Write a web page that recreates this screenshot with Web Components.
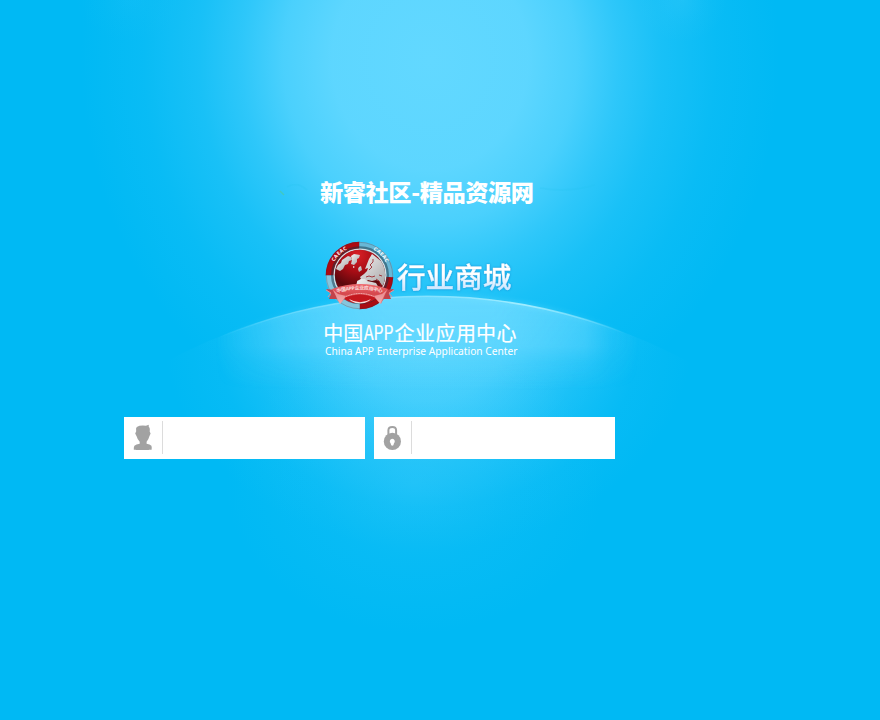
<!DOCTYPE html>
<html lang="zh-CN">
<head>
<meta charset="utf-8">
<title>行业商城</title>
<style>
html,body{margin:0;height:100%;background:#00b9f4;overflow:hidden}
body{font-family:"Noto Sans","Noto Sans CJK SC",sans-serif}
</style>
</head>
<body>
<login-page></login-page>
<script>
const define = (name, html) => {
  const t = document.createElement('template');
  t.innerHTML = html;
  customElements.define(name, class extends HTMLElement {
    constructor() {
      super();
      this.attachShadow({mode: 'open'}).append(t.content.cloneNode(true));
    }
  });
};

define('sky-backdrop', `
<style>:host{display:block;width:880px;height:720px}svg{display:block}</style>
<svg width="880" height="720" viewBox="0 0 880 720" aria-hidden="true">
  <defs>
    <radialGradient id="top" gradientUnits="userSpaceOnUse" cx="0" cy="0" r="1" gradientTransform="translate(430 60) scale(350 390)">
      <stop offset="0" stop-color="#62d8ff"/><stop offset=".28" stop-color="#60d7ff" stop-opacity=".97"/>
      <stop offset=".42" stop-color="#5dd6ff" stop-opacity=".8"/><stop offset=".54" stop-color="#58d4ff" stop-opacity=".52"/>
      <stop offset=".66" stop-color="#58d4ff" stop-opacity=".28"/>
      <stop offset=".82" stop-color="#58d4ff" stop-opacity=".1"/><stop offset="1" stop-color="#58d4ff" stop-opacity="0"/>
    </radialGradient>
    <radialGradient id="mid" gradientUnits="userSpaceOnUse" cx="0" cy="0" r="1" gradientTransform="translate(428 335) scale(265 215)">
      <stop offset="0" stop-color="#62d8ff" stop-opacity=".92"/><stop offset=".3" stop-color="#5ad5ff" stop-opacity=".74"/>
      <stop offset=".6" stop-color="#50d1ff" stop-opacity=".3"/><stop offset=".8" stop-color="#50d1ff" stop-opacity=".08"/><stop offset="1" stop-color="#50d1ff" stop-opacity="0"/>
    </radialGradient>
    <radialGradient id="low"><stop offset="0" stop-color="#5ad4ff" stop-opacity=".35"/><stop offset=".5" stop-color="#5ad4ff" stop-opacity=".13"/><stop offset="1" stop-color="#5ad4ff" stop-opacity="0"/></radialGradient>
    <linearGradient id="domeX" gradientUnits="userSpaceOnUse" x1="215" x2="640" y1="0" y2="0">
      <stop offset="0" stop-color="#fff" stop-opacity="0"/><stop offset=".15" stop-color="#fff" stop-opacity=".5"/>
      <stop offset=".4" stop-color="#fff"/><stop offset=".65" stop-color="#fff"/><stop offset=".87" stop-color="#fff" stop-opacity=".65"/>
      <stop offset=".93" stop-color="#fff" stop-opacity=".2"/><stop offset="1" stop-color="#fff" stop-opacity="0"/>
    </linearGradient>
    <linearGradient id="domeY" gradientUnits="userSpaceOnUse" x1="0" x2="0" y1="296" y2="390">
      <stop offset="0" stop-color="#6bdaff" stop-opacity=".9"/><stop offset=".53" stop-color="#68d9ff" stop-opacity=".76"/>
      <stop offset=".7" stop-color="#68d9ff" stop-opacity=".35"/><stop offset="1" stop-color="#68d9ff" stop-opacity="0"/>
    </linearGradient>
    <linearGradient id="rim" gradientUnits="userSpaceOnUse" x1="220" x2="625" y1="0" y2="0">
      <stop offset="0" stop-color="#82e4ff" stop-opacity="0"/><stop offset=".25" stop-color="#8ce5ff" stop-opacity=".6"/>
      <stop offset=".5" stop-color="#8ce5ff" stop-opacity=".75"/><stop offset=".75" stop-color="#a0edff"/>
      <stop offset="1" stop-color="#a6efff" stop-opacity="0"/>
    </linearGradient>
    <mask id="fade"><rect x="190" y="280" width="470" height="130" fill="url(#domeX)"/></mask>
    <filter id="soft" x="-20%" y="-100%" width="140%" height="300%"><feGaussianBlur stdDeviation="2.5"/></filter>
    <filter id="fine"><feGaussianBlur stdDeviation=".5"/></filter>
    <clipPath id="arc"><path d="M140 376.7A550 550 0 0 1 714 376.7V720H140Z"/></clipPath>
  </defs>
  <rect width="880" height="720" fill="#00b9f4"/>
  <rect width="880" height="720" fill="url(#top)"/>
  <g clip-path="url(#arc)">
    <rect y="290" width="880" height="430" fill="url(#mid)"/>
    <rect x="190" y="280" width="470" height="120" fill="url(#domeY)" mask="url(#fade)" opacity=".85"/>
  </g>
  <path d="M190 350A550 550 0 0 1 664 350" fill="none" stroke="url(#rim)" stroke-width="4" opacity=".25" filter="url(#soft)"/>
  <path d="M190 350A550 550 0 0 1 664 350" fill="none" stroke="url(#rim)" stroke-width="1.6" filter="url(#fine)"/>
  <ellipse cx="415" cy="485" rx="190" ry="150" fill="url(#low)" opacity=".65"/>
  <ellipse cx="682" cy="0" rx="45" ry="42" fill="url(#low)" opacity=".5"/>
  <ellipse cx="130" cy="0" rx="55" ry="42" fill="url(#low)" opacity=".2"/>
  <path d="M280 191l4 4" stroke="#4ac9ae" stroke-width="1.5" opacity=".75"/>
  <path d="M287 187q10 -6 20 3M540 188q28 5 55 -3" stroke="#23c2ef" fill="none" stroke-width="2" opacity=".18" filter="url(#fine)"/>
</svg>`);

define('caeac-emblem', `
<style>:host{display:block;width:72px;height:72px}svg{display:block}text{font-family:"Noto Sans","Noto Sans CJK SC",sans-serif;font-weight:700;fill:#fff}</style>
<svg width="72" height="72" viewBox="324 240 72 72">
  <defs>
    <radialGradient id="g" cx=".45" cy=".1" r=".95"><stop stop-color="#d92026"/><stop offset=".35" stop-color="#a80d15"/><stop offset=".68" stop-color="#5b080d"/><stop offset="1" stop-color="#a01a1e"/></radialGradient>
    <linearGradient id="l" x1="0" x2="1" y2="1"><stop stop-color="#f4f4f4"/><stop offset="1" stop-color="#a3a1a2"/></linearGradient>
    <linearGradient id="r" x2="0" y2="1"><stop stop-color="#ef6b70"/><stop offset=".5" stop-color="#d5474c"/><stop offset="1" stop-color="#e8888b"/></linearGradient>
    <path id="la" d="M332.9 264.5A28.8 28.8 0 0 1 351 248"/>
    <path id="ra" d="M371.5 249A28.8 28.8 0 0 1 387.3 266"/>
    <path id="rb" d="M335 293.5Q360 285.5 385 293.5"/>
    <clipPath id="c"><circle cx="360" cy="275" r="25.2"/></clipPath>
  </defs>
  <g fill="none" stroke-width="9">
    <path d="M330.2 275.5A29.3 29.3 0 0 1 359.5 246.2" stroke="#ae0a12"/>
    <path d="M359.5 246.2A29.3 29.3 0 0 1 388.8 277" stroke="#68b8d6"/>
    <path d="M388.8 277A29.3 29.3 0 0 1 359.5 304.8" stroke="#aa0b12"/>
    <path d="M359.5 304.8A29.3 29.3 0 0 1 330.2 275.5" stroke="#86c5dc"/>
    <circle cx="359.5" cy="275.5" r="33.2" stroke="#392b38" stroke-width=".8" opacity=".3"/>
    <circle cx="360" cy="275.3" r="27.7" stroke="#173342" stroke-width="2.6" opacity=".5"/>
    <circle cx="360" cy="275" r="25.8" stroke="#d5dfe3" stroke-width="1.3"/>
  </g>
  <circle cx="360" cy="275" r="25.2" fill="url(#g)"/>
  <g clip-path="url(#c)" fill="url(#l)">
    <path d="M345 258l3-2 3 1 1 3-3 1-1 3-3 1-2 4-3 2-2-1-2-1 2-4 3-2 1-3z"/>
    <path d="M351 256l3-2 6 1-1 3-2 1 0 3-3 3-3-1 1-4z"/>
    <path d="M369 259l3-5 4 3 6 5 5 8 1 12-3 6-4-4-2-3-3-1-4 1-4-1-2 2-4 0-1 3-4-1 0-3 4-2-1-2 4-3 3-3 1-3-3 1 2-5z"/>
    <path d="M357 282l4-3 4 0 2 2 5 1 4 1 3 5 4-1-3 7-6 5-3 2-2-6-2-4-6 0-5-5z"/>
    <path d="M359 267l2-1 1 4-3 2-1-3zM353 266l2 1-2 1z"/>
  </g>
  <path d="M373 259l0 3-3 3 2 2-3 3M366 277l3-1 3 1 3-1M376 279l3 2 2 5M379 275l3 1" fill="none" stroke="#98141b" stroke-width=".8"/>
  <path d="M341 296Q360 289 379 296Q371 304 360 303Q348 304 341 296Z" fill="#c4181e"/>
  <path d="M349 299Q360 305.5 371 299L369 301Q360 306 351 301Z" fill="#fff" opacity=".85"/>
  <path d="M326 289l9 1 2 9-8 0 2-5zM394 289l-9 1-3 9 9 0-2-5z" fill="#c2434a"/>
  <path d="M332 289Q360 279 388 289L381 304L374 297Q360 292 346 297L340 304Z" fill="url(#r)"/>
  <path d="M333 290l5 10 2 4 6-8-8-2zM387 290l-5 10-2 4-6-8 8-2z" fill="#ffd8d8" opacity=".5"/>
  <path d="M326 290l5 3-3 4M394 290l-5 3 3 4" stroke="#ef8b90" fill="none"/>
  <text font-size="5"><textPath href="#la" textLength="18" startOffset="3">CAEAC</textPath></text>
  <text font-size="5"><textPath href="#ra" textLength="18" startOffset="2">CAEAC</textPath></text>
  <text font-size="4.8" fill-opacity=".8"><textPath href="#rb" textLength="46" startOffset="2">中国APP企业应用中心</textPath></text>
  <path d="M346 296.5Q360 290.5 374 296.5" fill="none" stroke="#ffd2d2" stroke-width=".8" stroke-dasharray="1.2 .5"/>
</svg>`);

define('brand-title', `
<style>:host{display:block;width:216px;height:34px;color:#fff;font:800 23.2px/34px "Noto Sans CJK SC","Noto Sans",sans-serif;white-space:nowrap;letter-spacing:-.4px}</style><slot></slot>`);

define('brand-lockup', `
<style>
:host{display:flex;flex-direction:column;width:214px}
.row{display:flex;align-items:flex-start}
.name{padding:15px 0 0 1px;font:500 28.6px/42px "Noto Sans CJK SC",sans-serif;white-space:nowrap;-webkit-text-stroke:.45px transparent;
  background:linear-gradient(#fff 60%,#cfe8ff 85%);-webkit-background-clip:text;background-clip:text;color:transparent;filter:drop-shadow(0 .5px .8px #168bd0)}
svg{display:block;overflow:visible}
text{fill:#fff}
.zh{font:400 20px/34px "Noto Sans CJK SC",sans-serif;margin-top:4px}
.en{font:400 10.4px/14px "Noto Sans",sans-serif}
</style>
<div class="row"><caeac-emblem></caeac-emblem><div class="name"><slot name="name"></slot></div></div>
<svg class="zh" width="214" height="30" stroke="#fff" stroke-width=".2">
  <text x="-.7 19.3" y="24.5">中国</text>
  <text x="40" y="24" textLength="29.5" lengthAdjust="spacingAndGlyphs">APP</text>
  <text x="70.5 91 111.5 132 152 172.5" y="24.5">企业应用中心</text>
</svg>
<svg class="en" width="214" height="16"><text x="1" y="9.2" textLength="192.5" lengthAdjust="spacingAndGlyphs">China APP Enterprise Application Center</text></svg>`);

define('icon-field', `
<style>
:host{display:flex;align-items:flex-start;box-sizing:border-box;width:241px;height:42px;background:#fff;padding-top:4px}
.icon{width:var(--icon-width,38px);height:33px;border-right:1px solid #dcdcdc;flex:none}
input{flex:1;min-width:0;height:34px;box-sizing:border-box;border:0;padding:0 8px;background:transparent;font-size:14px;outline:0}
</style>
<div class="icon"><slot></slot></div><input>`);

define('user-icon', `
<style>:host,svg{display:block}</style>
<svg width="37" height="33" viewBox="0 0 37 33"><path fill="#a2a2a2" d="M12.8 6Q16 4 22 4.8L24.7 3.8L24.8 6Q26.2 6.5 25.7 10.5L26.6 12.5L25.3 15.5Q24.7 18.2 22.6 20.8V22.8Q26 23.5 27.4 24.7Q28 26 27.6 28.8H24.8L25 29H12L11.8 28.8H9.8Q9.6 26 10.4 24.7Q12 23.5 15.7 22.8V20.8Q13.3 18.2 12.7 15.5L11.2 12.5L12.2 10.2Q11.6 7 12.8 6Z"/></svg>`);

define('lock-icon', `
<style>:host,svg{display:block}</style>
<svg width="37" height="33" viewBox="0 0 37 33"><path d="M14.4 14V9.2Q14.4 5.9 18.3 5.9Q22.1 5.9 22.1 9.2V14" fill="none" stroke="#a2a2a2" stroke-width="2"/><circle cx="18.4" cy="20.4" r="8.6" fill="#a2a2a2"/><path d="M18.3 17.7A2.7 2.7 0 0 1 19.9 22.4L19.4 24.3Q18.3 25 17.2 24.3L16.7 22.4A2.7 2.7 0 0 1 18.3 17.7Z" fill="#fff"/></svg>`);

define('login-page', `
<style>
:host{display:grid;width:880px;height:720px;overflow:hidden}
sky-backdrop,main{grid-area:1/1}
main{display:flex;flex-direction:column;align-items:flex-start;z-index:1}
brand-title{margin:174px 0 0 320px}
brand-lockup{margin:32px 0 0 324px;height:132px}
form{display:flex;gap:9px;margin:45px 0 0 124px}
.pass{--icon-width:37px}
</style>
<sky-backdrop></sky-backdrop>
<main>
  <brand-title>新睿社区-精品资源网</brand-title>
  <brand-lockup><span slot="name">行业商城</span></brand-lockup>
  <form><icon-field><user-icon></user-icon></icon-field><icon-field class="pass"><lock-icon></lock-icon></icon-field></form>
</main>`);
</script>
</body>
</html>
